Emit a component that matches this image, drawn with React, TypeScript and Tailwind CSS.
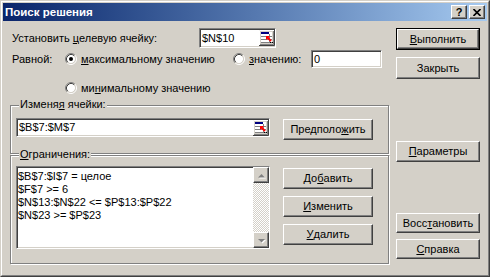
import React from 'react';

const raised =
  'bg-[#d4d0c8] border border-t-white border-l-white border-r-[#404040] border-b-[#404040] shadow-[inset_-1px_-1px_#808080]';
const sunken =
  'bg-white border border-t-[#808080] border-l-[#808080] border-r-white border-b-white shadow-[inset_1px_1px_#404040,inset_-1px_-1px_#d4d0c8]';
const etched = 'relative border border-[#808080] shadow-[inset_1px_1px_white,1px_1px_white]';

function Btn({ children, className = '', isDefault = false }: { children: React.ReactNode; className?: string; isDefault?: boolean }) {
  if (isDefault) {
    return (
      <div className={`border border-black shrink-0 ${className}`}>
        <div className={`${raised} w-full h-full flex items-center justify-center`}>{children}</div>
      </div>
    );
  }
  return <div className={`${raised} shrink-0 flex items-center justify-center ${className}`}>{children}</div>;
}

function Radio({ checked = false }: { checked?: boolean }) {
  return (
    <svg width="12" height="12" viewBox="0 0 12 12" className="shrink-0">
      <circle cx="6" cy="6" r="4.2" fill="white" />
      <path d="M2.11 9.89 A5.5 5.5 0 0 1 9.89 2.11" stroke="#808080" fill="none" />
      <path d="M9.89 2.11 A5.5 5.5 0 0 1 2.11 9.89" stroke="white" fill="none" />
      <path d="M2.82 9.18 A4.5 4.5 0 0 1 9.18 2.82" stroke="#404040" fill="none" />
      <path d="M9.18 2.82 A4.5 4.5 0 0 1 2.82 9.18" stroke="#d4d0c8" fill="none" />
      {checked && <circle cx="6" cy="6" r="2" fill="black" />}
    </svg>
  );
}

// the little "collapse dialog" button of a RefEdit box
function RefButton() {
  return (
    <svg width="16" height="16" viewBox="0 0 16 16" className="shrink-0">
      <rect x="0" y="0" width="16" height="16" fill="#d4d0c8" />
      <path d="M0.5 15 V0.5 H15" stroke="white" fill="none" />
      <path d="M0 15.5 H15.5 V0" stroke="#404040" fill="none" />
      <path d="M1 14.5 H14.5 V1" stroke="#808080" fill="none" />
      <rect x="2" y="2" width="11" height="11" fill="white" />
      <rect x="2" y="2" width="8" height="2" fill="#000080" />
      <path d="M2 6.5 H13 M2 9.5 H13 M2 12.5 H13 M10.5 4 V13" stroke="#808080" />
      <path d="M7 6 L11 6 L7 10 Z" fill="#ff0000" />
      <path d="M8 7 L12 11" stroke="#ff0000" strokeWidth="2" />
      <path d="M11 12.5 H12 M13 12.5 H14" stroke="black" />
    </svg>
  );
}

function Arrow({ down = false }: { down?: boolean }) {
  const pts = down ? '4,6 11,6 7.5,9.5' : '4,9.5 11,9.5 7.5,6';
  const shadow = down ? '5,7 12,7 8.5,10.5' : '5,10.5 12,10.5 8.5,7';
  return (
    <svg width="14" height="14" viewBox="0 0 14 14">
      <polygon points={shadow} fill="white" />
      <polygon points={pts} fill="#808080" />
    </svg>
  );
}

export default function App() {
  const constraints = [
    '$B$7:$I$7 = целое',
    '$F$7 >= 6',
    '$N$13:$N$22 <= $P$13:$P$22',
    '$N$23 >= $P$23',
  ];

  return (
    <div className="w-[490px] h-[277px] bg-[#d4d0c8] border border-[#d4d0c8] border-r-[#404040] border-b-[#404040] text-[11px] leading-[13px] text-black [font-family:'Liberation_Sans',Arial,sans-serif]">
      <div className="h-full border border-white border-r-[#808080] border-b-[#808080] p-px flex flex-col">
        {/* title bar */}
        <div className="h-[18px] shrink-0 flex items-center bg-linear-to-r from-[#0a246a] to-[#a6caf0] pl-[2px] pr-[2px]">
          <span className="text-white font-bold text-[11.5px] flex-1">Поиск решения</span>
          <Btn className="w-[16px] h-[14px] font-bold text-[11px] leading-none">?</Btn>
          <Btn className="w-[16px] h-[14px] ml-[2px]">
            <svg width="8" height="7" viewBox="0 0 8 7">
              <path d="M0.5 0 L7.5 7 M7.5 0 L0.5 7" stroke="black" strokeWidth="1.6" />
            </svg>
          </Btn>
        </div>

        <div className="flex flex-1 pl-[7px]">
          {/* left column */}
          <div className="w-[379px] shrink-0 flex flex-col">
            <div className="flex items-center h-[20px] mt-[7px]">
              <span className="w-[189px] shrink-0 pl-[2px]">
                Установить <span className="underline">ц</span>елевую ячейку:
              </span>
              <div className={`${sunken} w-[77px] h-[20px] flex items-center pl-[2px]`}>
                <span className="flex-1">$N$10</span>
                <RefButton />
              </div>
            </div>

            <div className="flex items-center h-[18px] mt-[2px]">
              <span className="w-[55px] shrink-0 pl-[2px]">Равной:</span>
              <Radio checked />
              <span className="w-[156px] shrink-0 pl-[4px]">
                <span className="underline">м</span>аксимальному значению
              </span>
              <Radio />
              <span className="w-[66px] shrink-0 pl-[4px]">
                <span className="underline">з</span>начению:
              </span>
              <div className={`${sunken} w-[71px] h-[18px] shrink-0 flex items-center pl-[2px]`}>0</div>
            </div>

            <div className="flex items-center h-[14px] mt-[13px] pl-[55px]">
              <Radio />
              <span className="pl-[4px]">
                ми<span className="underline">н</span>имальному значению
              </span>
            </div>

            <div className={`${etched} h-[49px] mt-[10px]`}>
              <span className="absolute -top-[8px] left-[8px] px-px bg-[#d4d0c8]">
                Изменя<span className="underline">я</span> ячейки:
              </span>
              <div className="flex items-start pl-[5px] pt-[12px]">
                <div className={`${sunken} w-[254px] h-[19px] shrink-0 flex items-center pl-[2px]`}>
                  <span className="flex-1">$B$7:$M$7</span>
                  <RefButton />
                </div>
                <Btn className="w-[90px] h-[21px] ml-[13px] mt-px">
                  Предполо<span className="underline">ж</span>ить
                </Btn>
              </div>
            </div>

            <div className={`${etched} h-[109px] mt-px`}>
              <span className="absolute -top-[8px] left-[8px] px-px bg-[#d4d0c8]">
                <span className="underline">О</span>граничения:
              </span>
              <div className="flex items-start pl-[5px] pt-[10px]">
                <div className={`${sunken} w-[254px] h-[83px] shrink-0 flex`}>
                  <div className="flex-1 pl-[1px] pt-[3px] whitespace-nowrap">
                    {constraints.map((c) => (
                      <div key={c}>{c}</div>
                    ))}
                  </div>
                  <div className="w-[16px] flex flex-col">
                    <div className={`${raised} h-[16px] flex items-center justify-center`}>
                      <Arrow />
                    </div>
                    <div className="flex-1 bg-[image:repeating-conic-gradient(#d4d0c8_0_25%,#fff_0_50%)] bg-[length:2px_2px]" />
                    <div className={`${raised} h-[16px] flex items-center justify-center`}>
                      <Arrow down />
                    </div>
                  </div>
                </div>
                <div className="flex flex-col gap-[7px] ml-[13px] mt-[2px]">
                  <Btn className="w-[90px] h-[21px]">
                    До<span className="underline">б</span>авить
                  </Btn>
                  <Btn className="w-[90px] h-[21px]">
                    <span className="underline">И</span>зменить
                  </Btn>
                  <Btn className="w-[90px] h-[21px]">
                    <span className="underline">У</span>далить
                  </Btn>
                </div>
              </div>
            </div>
          </div>

          {/* right column */}
          <div className="w-[84px] ml-[7px] flex flex-col pt-[7px]">
            <Btn isDefault className="h-[22px]">
              <span>
                <span className="underline">В</span>ыполнить
              </span>
            </Btn>
            <Btn className="h-[22px] mt-[7px]">Закрыть</Btn>
            <Btn className="h-[21px] mt-[62px]">
              <span>
                <span className="underline">П</span>араметры
              </span>
            </Btn>
            <Btn className="h-[20px] mt-[51px]">
              <span>
                Восс<span className="underline">т</span>ановить
              </span>
            </Btn>
            <Btn className="h-[20px] mt-[6px]">
              <span>
                <span className="underline">С</span>правка
              </span>
            </Btn>
          </div>
        </div>
      </div>
    </div>
  );
}
